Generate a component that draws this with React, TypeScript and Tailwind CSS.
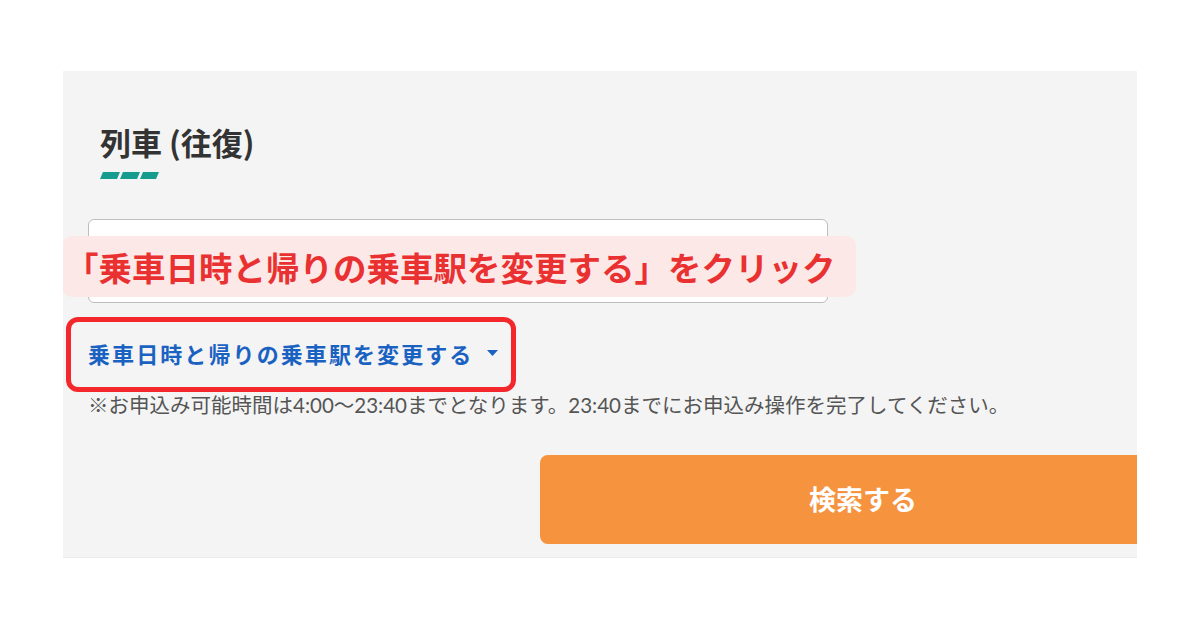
const JP = "font-['Noto_Sans_CJK_JP','Noto_Sans',sans-serif]";

function Dashes() {
  return (
    <svg width="60" height="9" viewBox="0 0 60 9" className="block">
      <polygon points="3,0 20,0 17,7 0,7" fill="#169b8f" />
      <polygon points="23,0 40,0 37,7 20,7" fill="#169b8f" />
      <polygon points="43,0 59,0 56,7 40,7" fill="#169b8f" />
    </svg>
  );
}

export default function App() {
  return (
    <div className={`h-[630px] w-[1200px] overflow-hidden bg-white pl-[63px] pt-[71px] ${JP}`}>
      <div className="relative h-[487px] w-[1074px] overflow-hidden border-b border-[#ebebeb] bg-[#f4f4f4] pl-[25px]">
        {/* heading */}
        <div className="ml-[12px] pt-[51px]">
          <h2 className="text-[31px] font-bold leading-[40px] text-[#333]">列車 (往復)</h2>
          <div className="mt-[10px]">
            <Dashes />
          </div>
        </div>

        {/* input */}
        <div className="relative mt-[38px] h-[84px] w-[740px] rounded-[6px] border border-[#bdbdbd] bg-white" />

        {/* link */}
        <div className="relative mt-[35px] flex h-[30px] items-center">
          <span className="text-[22px] font-bold tracking-[0.095em] text-[#1a62c2]">乗車日時と帰りの乗車駅を変更する</span>
          <svg width="11" height="6" viewBox="0 0 11 6" className="ml-[14px]">
            <polygon points="0,0 11,0 5.5,6" fill="#1a62c2" />
          </svg>
          <div className="pointer-events-none absolute left-[-22px] top-[-21px] h-[75px] w-[450px] rounded-[12px] border-[5px] border-[#f4282c]" />
        </div>

        {/* note */}
        <p className="mt-[24px] text-[20.5px] leading-[26px] text-[#555] font-['Lato','Noto_Sans_CJK_JP',sans-serif]">
          ※お申込み可能時間は4:00〜23:40までとなります。23:40までにお申込み操作を完了してください。
        </p>

        {/* search button */}
        <div className="mt-[37px] flex">
          <button className="ml-[452px] flex h-[89px] w-[646px] shrink-0 items-center justify-center rounded-[8px] bg-[#f5933f] text-[27px] font-bold text-white">
            検索する
          </button>
        </div>

        {/* annotation label */}
        <div className="absolute left-[-1px] top-[165px] flex h-[61px] w-[794px] items-center rounded-[10px] bg-[#fde8e8] pl-[3px]">
          <span className="text-[33.5px] font-bold leading-none text-[#ea3131]">「乗車日時と帰りの乗車駅を変更する」をクリック</span>
        </div>
      </div>
    </div>
  );
}
